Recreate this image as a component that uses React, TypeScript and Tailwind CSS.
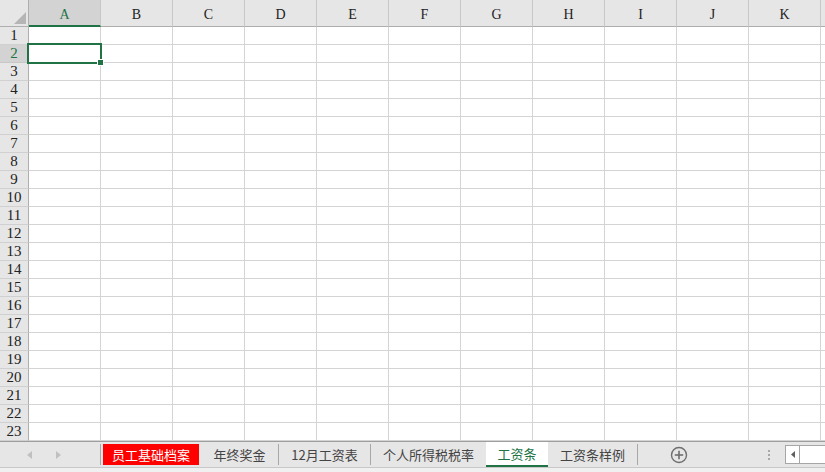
import React from 'react';

const columns = ['A', 'B', 'C', 'D', 'E', 'F', 'G', 'H', 'I', 'J', 'K'];
const rows = Array.from({ length: 23 }, (_, i) => i + 1);

const tabs = [
  { name: '员工基础档案', width: 'w-[100px]', kind: 'red' },
  { name: '年终奖金', width: 'w-[77px]', kind: 'normal', sep: true },
  { name: '12月工资表', width: 'w-[91px]', kind: 'normal', sep: true },
  { name: '个人所得税税率', width: 'w-[115px]', kind: 'normal' },
  { name: '工资条', width: 'w-[62px]', kind: 'active' },
  { name: '工资条样例', width: 'w-[89px]', kind: 'normal', sep: true },
];

function Separator() {
  return <div className="h-[21px] w-px shrink-0 bg-[#a8a8a8]" />;
}

export default function App() {
  return (
    <div className="flex h-[472px] w-[825px] flex-col overflow-hidden bg-white text-[14px] text-[#222] [font-family:'Liberation_Serif',serif]">
      {/* Sheet grid */}
      <div className="grid grid-cols-[29px_repeat(11,72px)_4px] grid-rows-[27px_repeat(23,18px)]">
        {/* corner */}
        <div className="relative border-r border-b border-[#aeaeae] bg-[#e6e6e6]">
          <svg className="absolute left-[14px] top-[12px]" width="12" height="12" viewBox="0 0 12 12">
            <polygon points="12,0 12,12 0,12" fill="#b5b5b5" />
          </svg>
        </div>
        {columns.map((c, i) => (
          <div
            key={c}
            className={
              i === 0
                ? 'flex items-end justify-center border-r border-b-2 border-r-[#c8c8c8] border-b-[#217346] bg-[#d3d3d3] pb-[3px] leading-none text-[#217346]'
                : 'flex items-end justify-center border-r border-b border-r-[#c8c8c8] border-b-[#aeaeae] bg-[#e6e6e6] pb-[4px] leading-none'
            }
          >
            {c}
          </div>
        ))}
        <div className="border-b border-[#aeaeae] bg-[#e6e6e6]" />

        {rows.map((r) => (
          <React.Fragment key={r}>
            <div
              className={
                r === 2
                  ? 'flex items-center justify-center border-r border-b border-r-[#aeaeae] border-b-[#c8c8c8] bg-[#d3d3d3] text-[15px] leading-none text-[#217346]'
                  : 'flex items-center justify-center border-r border-b border-r-[#aeaeae] border-b-[#d0d0d0] bg-[#e6e6e6] text-[15px] leading-none'
              }
            >
              {r}
            </div>
            {columns.map((c) => (
              <div key={c} className="relative border-r border-b border-[#d4d4d4]">
                {r === 2 && c === 'A' && (
                  <>
                    <div className="absolute left-[-2px] top-[-2px] z-10 h-[21px] w-[75px] border-2 border-[#217346]" />
                    <div className="absolute left-[68px] top-[14px] z-20 h-[7px] w-[7px] border border-white bg-[#217346]" />
                  </>
                )}
              </div>
            ))}
            <div className="border-b border-[#d4d4d4]" />
          </React.Fragment>
        ))}
      </div>

      {/* Sheet tabs */}
      <div className="flex h-[26px] shrink-0 items-center border-t border-[#9e9e9e] bg-[#e6e6e6] text-[13px] text-[#444] [font-family:'Noto_Sans_CJK_SC','Noto_Sans',sans-serif]">
        <div className="flex h-full w-[100px] shrink-0 items-center">
          <svg className="ml-[27px]" width="5" height="8" viewBox="0 0 5 8">
            <polygon points="5,0 5,8 0,4" fill="#c0c0c0" />
          </svg>
          <svg className="ml-[24px]" width="5" height="8" viewBox="0 0 5 8">
            <polygon points="0,0 0,8 5,4" fill="#c0c0c0" />
          </svg>
        </div>
        <Separator />
        {tabs.map((t) => (
          <React.Fragment key={t.name}>
            {t.kind === 'red' && (
              <div className={`${t.width} flex h-full shrink-0 items-center justify-center px-[2px] py-[2px]`}>
                <div className="flex h-full w-full items-center justify-center bg-[#ff0000] text-white">{t.name}</div>
              </div>
            )}
            {t.kind === 'normal' && (
              <div className={`${t.width} flex h-full shrink-0 items-center justify-center`}>{t.name}</div>
            )}
            {t.kind === 'active' && (
              <div className={`${t.width} flex h-full shrink-0 items-center justify-center border-b-2 border-[#217346] bg-white text-[#217346]`}>
                {t.name}
              </div>
            )}
            {t.sep && <Separator />}
          </React.Fragment>
        ))}
        <div className="ml-[32px] flex h-[18px] w-[18px] items-center justify-center">
          <svg width="18" height="18" viewBox="0 0 18 18">
            <circle cx="9" cy="9" r="7.5" fill="none" stroke="#6e6e6e" strokeWidth="1.4" />
            <line x1="9" y1="4.8" x2="9" y2="13.2" stroke="#6e6e6e" strokeWidth="1.6" />
            <line x1="4.8" y1="9" x2="13.2" y2="9" stroke="#6e6e6e" strokeWidth="1.6" />
          </svg>
        </div>
        <div className="ml-[80px] flex flex-col gap-[2px]">
          <div className="h-[2px] w-[2px] bg-[#a8a8a8]" />
          <div className="h-[2px] w-[2px] bg-[#a8a8a8]" />
          <div className="h-[2px] w-[2px] bg-[#a8a8a8]" />
        </div>
        <div className="ml-[15px] flex h-[19px] flex-1 border border-r-0 border-[#a6a6a6] bg-white">
          <div className="flex w-[14px] items-center justify-center border-r border-[#a6a6a6]">
            <svg width="4" height="7" viewBox="0 0 4 7">
              <polygon points="4,0 4,7 0,3.5" fill="#606060" />
            </svg>
          </div>
        </div>
      </div>
      <div className="flex-1 border-t border-[#c8c8c8] bg-[#f0f0f0]" />
    </div>
  );
}
